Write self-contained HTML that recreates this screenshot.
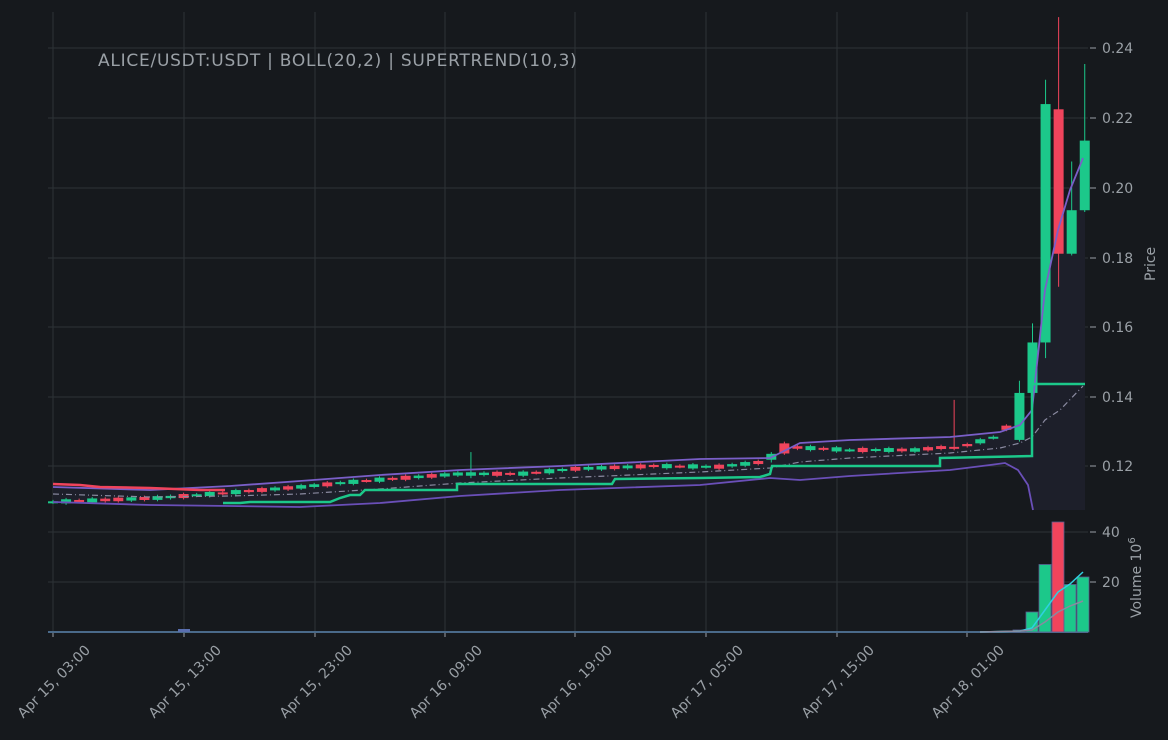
<!DOCTYPE html>
<html><head><meta charset="utf-8"><style>
html,body{margin:0;padding:0;background:#16191d;}
svg{display:block;font-family:"DejaVu Sans","Liberation Sans",sans-serif;}
</style></head><body>
<svg id="s" width="1168" height="740" viewBox="0 0 1168 740" xmlns="http://www.w3.org/2000/svg">
<rect width="1168" height="740" fill="#16191d"/>
<g id="grid" stroke="#2d3236" stroke-width="1"></g>
<g id="plot"></g>
<text x="98" y="66" fill="#9aa0a6" font-size="17" letter-spacing="0.75">ALICE/USDT:USDT | BOLL(20,2) | SUPERTREND(10,3)</text>
<g fill="#9aa0a6" font-size="14">
<text x="1102" y="53">0.24</text><text x="1102" y="123">0.22</text><text x="1102" y="193">0.20</text>
<text x="1102" y="263">0.18</text><text x="1102" y="332">0.16</text><text x="1102" y="402">0.14</text>
<text x="1102" y="471">0.12</text><text x="1102" y="537">40</text><text x="1102" y="587">20</text>
<text transform="translate(1155,281) rotate(-90)">Price</text>
<text transform="translate(1141,618) rotate(-90)">Volume  10<tspan font-size="10" dy="-6">6</tspan></text>
</g>
<g id="xl" fill="#9aa0a6" font-size="14"></g>
</svg>
<script>
const NS="http://www.w3.org/2000/svg";
function el(p,t,a){const e=document.createElementNS(NS,t);for(const k in a)e.setAttribute(k,a[k]);p.appendChild(e);return e;}
const G=document.getElementById('grid'),P=document.getElementById('plot'),XL=document.getElementById('xl');
const xt=[53,184,315,445,575,706,837,967];
const labs=["Apr 15, 03:00","Apr 15, 13:00","Apr 15, 23:00","Apr 16, 09:00","Apr 16, 19:00","Apr 17, 05:00","Apr 17, 15:00","Apr 18, 01:00"];
xt.forEach((x,i)=>{el(G,'line',{x1:x,y1:12,x2:x,y2:632});el(G,'line',{x1:x,y1:632,x2:x,y2:637,stroke:'#9aa0a6'});
 const t=el(XL,'text',{'text-anchor':'end',transform:`translate(${x+38},${651}) rotate(-45)`});t.textContent=labs[i];});
[48,118,188,258,327,397,466,532,582].forEach(y=>{el(G,'line',{x1:48,y1:y,x2:1088,y2:y});el(G,'line',{x1:1090,y1:y,x2:1096,y2:y,stroke:'#9aa0a6'});});
const X=i=>53+i*13.06, Y=p=>466-(p-0.12)*3480;
function interp(kp,x){for(let i=0;i<kp.length-1;i++){if(x<=kp[i+1][0]){const [a,b]=kp[i],[c,d]=kp[i+1];return b+(d-b)*(x-a)/(c-a);}}return kp[kp.length-1][1];}
function pl(kp){return kp.map(p=>p.join(',')).join(' ');}
const up=[[53,487],[150,490],[230,486],[300,481],[380,475],[460,470],[560,466],[700,459],[770,458],[800,443],[850,440],[950,437],[1000,432],[1020,425],[1032,410],[1045,290],[1058,230],[1070,190],[1083,158]];
const lo=[[53,502],[150,505],[230,506],[300,507],[380,503],[460,496],[560,490],[700,485],[770,478],[800,480],[850,476],[950,470],[990,465],[1005,463],[1018,470],[1028,485],[1033,510]];
const mid=[[53,494],[150,497],[230,496],[300,494],[380,489],[460,483],[560,478],[700,472],[770,468],[800,462],[850,458],[950,453],[1000,448],[1020,443],[1032,437],[1045,420],[1060,410],[1083,386]];
el(P,'polygon',{points:pl(up)+' 1085,158 1085,510 1033,510 '+pl(lo.slice().reverse()),fill:'#1d1f2a'});
const kp=[[0,0.1097],[8,0.1108],[14,0.1125],[19,0.1140],[24,0.1158],[31,0.1177],[36,0.1178],[40,0.1192],[46,0.1200],[51,0.1198],[54,0.1210],[56,0.1255],[61,0.1246],[66,0.1246],[70,0.1260],[72,0.1282],[73,0.1310],[74,0.1290]];
const C=[];
for(let i=0;i<74;i++){const b=interp(kp,i);const d=0.0003+0.0009*Math.abs(Math.sin(i*1.7));const g=Math.sin(i*2.3+0.5)>-0.1;
 let o=g?b-d/2:b+d/2,c=g?b+d/2:b-d/2;C.push([o,c,Math.max(o,c)+0.0004,Math.min(o,c)-0.0004]);}
C[69]=[0.1255,0.1252,0.139,0.1245];C[32]=[0.1172,0.1182,0.124,0.1165];C[55]=[0.1218,0.1235,0.124,0.121];C[56]=[0.1265,0.1236,0.127,0.1232];
C.push([0.1275,0.141,0.1445,0.127],[0.141,0.1555,0.161,0.1405],[0.1555,0.224,0.231,0.151],[0.2225,0.181,0.249,0.1715],[0.181,0.1935,0.2075,0.1805],[0.1935,0.2135,0.2355,0.193]);
C.forEach((k,i)=>{const [o,c,h,l]=k;const col=c>=o?'#1cc88a':'#f0445c';const x=X(i);
 el(P,'line',{x1:x,y1:Y(h),x2:x,y2:Y(l),stroke:col,'stroke-width':1});
 const t=Math.min(Y(o),Y(c)),hh=Math.max(2,Math.abs(Y(o)-Y(c)));el(P,'rect',{x:x-5,y:t,width:10,height:hh,fill:col});});
el(P,'polyline',{points:pl(up),fill:'none',stroke:'#7a5fc8','stroke-width':1.8});
el(P,'polyline',{points:pl(lo),fill:'none',stroke:'#6a4fb8','stroke-width':1.8});
el(P,'polyline',{points:pl(mid),fill:'none',stroke:'#8a8aa0','stroke-width':1.2,'stroke-dasharray':'6,3,1,3'});
el(P,'polyline',{points:'53,484 80,485 100,487 150,488 200,490 225,490',fill:'none',stroke:'#f0445c','stroke-width':2.5});
el(P,'polyline',{points:'223,503 240,503 250,502 300,502 330,502 340,498 350,495 360,495 365,490 457,490 457,484 612,484 615,479 700,478 760,477 770,474 772,466 940,466 940,458 1032,456 1032,384 1085,384',fill:'none',stroke:'#1cc88a','stroke-width':2.5});
el(P,'line',{x1:48,y1:632,x2:1088,y2:632,stroke:'#4a6a8a','stroke-width':2});
[[1019,0.8],[1032,8],[1045,27],[1058,44],[1070,19],[1083,22]].forEach((v,i)=>{const red=i==3;const h=v[1]*2.5;
 el(P,'rect',{x:v[0]-6,y:632-h,width:12,height:h,fill:red?'#f0445c':'#1cc88a',stroke:'#5a5f90','stroke-width':0.8});});
el(P,'rect',{x:178,y:629,width:12,height:3,fill:'#5a6fb0'});
el(P,'polyline',{points:'980,632 1020,631 1032,628 1045,610 1058,592 1070,584 1083,572',fill:'none',stroke:'#2fd0e0','stroke-width':1.5});
el(P,'polyline',{points:'980,632 1020,631 1032,630 1045,622 1058,612 1070,606 1083,601',fill:'none',stroke:'#8a8aa0','stroke-width':1.5});
</script>
</body></html>
